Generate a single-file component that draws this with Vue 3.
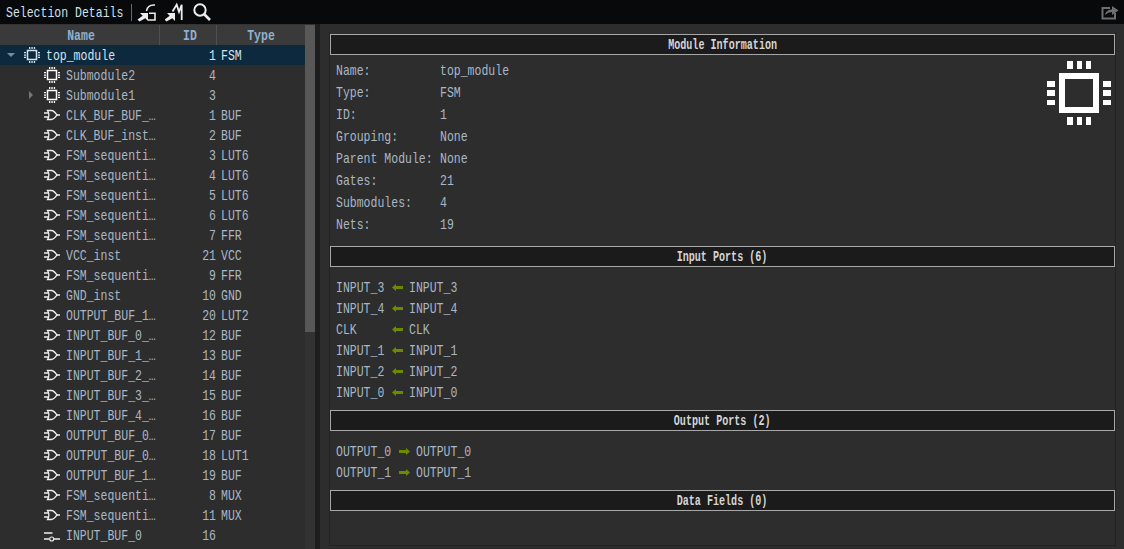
<template>
  <div class="app">
    <div class="toolbar">
      <span class="tb-title"><span class="t">Selection Details</span></span>
      <span class="tb-sep"></span>
      <svg class="tb-icon" width="20" height="20" viewBox="0 0 20 20">
        <path d="M11 11V19L8.300 16.300L2.500 19.500L0.500 17.500L5.700 13.700L3 11Z" fill="#ececec" />
        <path d="M18 3Q10.500 2.500 9.500 9M12 11.300H18V18H11" fill="none" stroke="#ececec" stroke-width="1.600" />
      </svg>
      <svg class="tb-icon second" width="20" height="20" viewBox="0 0 20 20">
        <path d="M10 11V19L7.300 16.300L1.500 19.500L-0.500 17.500L4.700 13.700L2 11Z" fill="#ececec" />
        <path d="M7.500 9.500L11.700 2.700L14 9.700L16.700 2.700V18" fill="none" stroke="#ececec" stroke-width="1.800" />
      </svg>
      <svg class="tb-icon" width="20" height="20" viewBox="0 0 20 20">
        <circle cx="8" cy="8" r="5.700" fill="none" stroke="#ececec" stroke-width="2" />
        <path d="M12 12L18 18" stroke="#ececec" stroke-width="2.600" />
      </svg>
      <svg class="tb-share" width="18" height="16" viewBox="0 0 18 16">
        <path d="M9 4H1.500V14.500H14V9" fill="none" stroke="#6f6f6f" stroke-width="2" />
        <path d="M4 11Q5 5.500 11 5.500V2L17.500 6.500L11 11V8Q7 8 4 11Z" fill="#6f6f6f" />
      </svg>
    </div>

    <div class="main">
      <div class="tree-pane">
        <div class="tree">
          <div class="tree-head">
            <div class="col-name"><span class="t t-center">Name</span></div>
            <div class="col-id"><span class="t t-center">ID</span></div>
            <div class="col-type"><span class="t t-center">Type</span></div>
          </div>
          <div
            v-for="row in rows"
            :key="row.name + row.id"
            class="tree-row"
            :class="{ selected: row.selected }"
          >
            <div class="cell-name" :class="{ child: !row.selected }">
              <span class="caret" :class="row.caret"></span>
              <svg v-if="row.icon === 'chip'" class="row-icon" width="16" height="16" viewBox="0 0 16 16">
                <rect x="3.500" y="3.500" width="9" height="9" fill="none" :stroke="row.selected ? '#d4e4ee' : '#fff'" stroke-width="1.500" />
                <path d="M5 0h1.300v2H5zM7.400 0h1.300v2H7.400zM9.800 0h1.300v2H9.800zM5 14h1.300v2H5zM7.400 14h1.300v2H7.400zM9.800 14h1.300v2H9.800zM0 5h2v1.300H0zM0 7.400h2v1.300H0zM0 9.800h2v1.300H0zM14 5h2v1.300h-2zM14 7.400h2v1.300h-2zM14 9.800h2v1.300h-2z" :fill="row.selected ? '#d4e4ee' : '#fff'" />
              </svg>
              <svg v-else-if="row.icon === 'gate'" class="row-icon" width="16" height="16" viewBox="0 0 16 16">
                <path d="M3.500 3.500H7.500C10 3.500 11.500 6 13 8C11.500 10 10 12.500 7.500 12.500H3.500C5 10 5 6 3.500 3.500Z" fill="none" stroke="#eee" stroke-width="1.300" />
                <path d="M0 6H4.500M0 10H4.500M13 8H16" stroke="#eee" stroke-width="1.300" />
              </svg>
              <svg v-else class="row-icon" width="16" height="16" viewBox="0 0 16 16">
                <path d="M0 6H8.500M0 12H5.500M10 12H16" stroke="#eee" stroke-width="1.300" fill="none" />
                <circle cx="7.700" cy="12" r="2" fill="none" stroke="#eee" stroke-width="1.100" />
              </svg>
              <span class="t name-text">{{ row.name }}</span>
            </div>
            <div class="cell-id"><span class="t t-right">{{ row.id }}</span></div>
            <div class="cell-type"><span class="t">{{ row.type }}</span></div>
          </div>
        </div>
        <div class="scrollbar"><div class="thumb"></div></div>
      </div>
      <div class="splitter"></div>

      <div class="details">
        <div class="frame">
          <div class="section-head"><span class="t t-center">Module Information</span></div>
          <div class="info">
            <div v-for="item in info" :key="item[0]" class="info-row">
              <span class="info-label"><span class="t">{{ item[0] }}</span></span>
              <span class="t">{{ item[1] }}</span>
            </div>
            <svg class="big-chip" width="64" height="64" viewBox="0 0 64 64">
              <rect x="15" y="15" width="34" height="34" fill="none" stroke="#fff" stroke-width="6" />
              <path d="M20 0h6v8h-6zM30 0h5v8h-5zM39 0h5v8h-5zM20 56h6v8h-6zM30 56h5v8h-5zM39 56h5v8h-5zM0 20h8v6H0zM0 29h8v6H0zM0 39h8v5H0zM56 20h8v6h-8zM56 29h8v6h-8zM56 39h8v5h-8z" fill="#fff" />
            </svg>
          </div>

          <div class="section-head"><span class="t t-center">Input Ports (6)</span></div>
          <div class="ports">
            <div v-for="port in inputs" :key="port" class="port-row">
              <span class="input-label"><span class="t">{{ port }}</span></span>
              <span class="arrow">
                <svg width="11" height="7" viewBox="0 0 11 7"><path d="M0 3.500L4 0V2H11V5H4V7Z" fill="#6c8a00" /></svg>
              </span>
              <span class="t">{{ port }}</span>
            </div>
          </div>

          <div class="section-head"><span class="t t-center">Output Ports (2)</span></div>
          <div class="ports">
            <div v-for="port in outputs" :key="port" class="port-row">
              <span class="output-label"><span class="t">{{ port }}</span></span>
              <span class="arrow">
                <svg width="11" height="7" viewBox="0 0 11 7"><path d="M11 3.500L7 0V2H0V5H7V7Z" fill="#6c8a00" /></svg>
              </span>
              <span class="t">{{ port }}</span>
            </div>
          </div>

          <div class="section-head"><span class="t t-center">Data Fields (0)</span></div>
        </div>
      </div>
    </div>
  </div>
</template>

<script setup>
const rows = [
  { name: 'top_module', id: 1, type: 'FSM', icon: 'chip', caret: 'down', selected: true },
  { name: 'Submodule2', id: 4, type: '', icon: 'chip' },
  { name: 'Submodule1', id: 3, type: '', icon: 'chip', caret: 'right' },
  { name: 'CLK_BUF_BUF_…', id: 1, type: 'BUF', icon: 'gate' },
  { name: 'CLK_BUF_inst…', id: 2, type: 'BUF', icon: 'gate' },
  { name: 'FSM_sequenti…', id: 3, type: 'LUT6', icon: 'gate' },
  { name: 'FSM_sequenti…', id: 4, type: 'LUT6', icon: 'gate' },
  { name: 'FSM_sequenti…', id: 5, type: 'LUT6', icon: 'gate' },
  { name: 'FSM_sequenti…', id: 6, type: 'LUT6', icon: 'gate' },
  { name: 'FSM_sequenti…', id: 7, type: 'FFR', icon: 'gate' },
  { name: 'VCC_inst', id: 21, type: 'VCC', icon: 'gate' },
  { name: 'FSM_sequenti…', id: 9, type: 'FFR', icon: 'gate' },
  { name: 'GND_inst', id: 10, type: 'GND', icon: 'gate' },
  { name: 'OUTPUT_BUF_1…', id: 20, type: 'LUT2', icon: 'gate' },
  { name: 'INPUT_BUF_0_…', id: 12, type: 'BUF', icon: 'gate' },
  { name: 'INPUT_BUF_1_…', id: 13, type: 'BUF', icon: 'gate' },
  { name: 'INPUT_BUF_2_…', id: 14, type: 'BUF', icon: 'gate' },
  { name: 'INPUT_BUF_3_…', id: 15, type: 'BUF', icon: 'gate' },
  { name: 'INPUT_BUF_4_…', id: 16, type: 'BUF', icon: 'gate' },
  { name: 'OUTPUT_BUF_0…', id: 17, type: 'BUF', icon: 'gate' },
  { name: 'OUTPUT_BUF_0…', id: 18, type: 'LUT1', icon: 'gate' },
  { name: 'OUTPUT_BUF_1…', id: 19, type: 'BUF', icon: 'gate' },
  { name: 'FSM_sequenti…', id: 8, type: 'MUX', icon: 'gate' },
  { name: 'FSM_sequenti…', id: 11, type: 'MUX', icon: 'gate' },
  { name: 'INPUT_BUF_0', id: 16, type: '', icon: 'net' },
]

const info = [
  ['Name:', 'top_module'],
  ['Type:', 'FSM'],
  ['ID:', '1'],
  ['Grouping:', 'None'],
  ['Parent Module:', 'None'],
  ['Gates:', '21'],
  ['Submodules:', '4'],
  ['Nets:', '19'],
]

const inputs = ['INPUT_3', 'INPUT_4', 'CLK', 'INPUT_1', 'INPUT_2', 'INPUT_0']
const outputs = ['OUTPUT_0', 'OUTPUT_1']
</script>

<style>
html,
body {
  margin: 0;
  background: #2d2d2d;
  overflow: hidden;
}
</style>

<style scoped>
.app {
  width: 1124px;
  height: 549px;
  display: flex;
  flex-direction: column;
  overflow: hidden;
  font-family: "Liberation Mono", monospace;
  font-size: 15px;
  color: #a9b7c6;
  background: #2d2d2d;
}

/* the original font is tall and narrow, so squeeze the mono font to 7px a char */
.t {
  display: inline-block;
  flex: none;
  white-space: pre;
  transform: scaleX(0.767);
  transform-origin: left center;
}

.t-center {
  transform-origin: center center;
}

.t-right {
  transform-origin: right center;
}

.toolbar {
  height: 24px;
  flex: none;
  display: flex;
  align-items: center;
  padding-left: 6px;
  background: #08090b;
}

.tb-title {
  width: 125px;
  flex: none;
  padding-top: 2px;
  color: #cfe0ee;
  white-space: nowrap;
}

.tb-sep {
  width: 1px;
  height: 17px;
  margin-right: 5px;
  background: #6a6a6a;
}

.tb-icon {
  margin-right: 8px;
}

.tb-icon.second {
  margin-right: 7px;
}

.tb-share {
  margin-left: auto;
  margin-right: 5px;
}

.main {
  flex: 1;
  display: flex;
  min-height: 0;
}

.tree-pane {
  width: 315px;
  flex: none;
  display: flex;
  border-top: 1px solid #333;
  overflow: hidden;
}

.tree {
  flex: 1;
  min-width: 0;
}

.tree-head {
  height: 20px;
  display: flex;
  background: #3a3a3a;
  line-height: 24px;
  font-weight: bold;
  color: #8fb0d0;
}

.col-name {
  width: 160px;
  padding-left: 3px;
  text-align: center;
  border-right: 1px solid #505050;
  box-sizing: border-box;
}

.col-id {
  width: 57px;
  text-align: center;
  border-right: 1px solid #505050;
  box-sizing: border-box;
  padding-left: 5px;
}

.col-type {
  flex: 1;
  text-align: center;
}

.tree-row {
  height: 20px;
  display: flex;
  align-items: center;
  line-height: 20px;
  background: #2d2d2d;
}

.tree-row .t {
  padding-top: 4px;
}

.tree-row.selected {
  background: #0d293e;
  color: #d4e4ee;
}

.cell-name {
  width: 160px;
  display: flex;
  align-items: center;
  flex: none;
}

.caret {
  width: 24px;
  padding-right: 2px;
  box-sizing: border-box;
  flex: none;
  display: flex;
  justify-content: center;
}

.child .caret {
  width: 44px;
  padding-left: 20px;
}

.caret.down::before {
  content: "";
  border: 4px solid transparent;
  border-top: 4px solid #7a8a96;
  border-bottom: 0;
}

.caret.right::before {
  content: "";
  border: 4px solid transparent;
  border-left: 4px solid #777;
  border-right: 0;
}

.row-icon {
  flex: none;
  margin-right: 6px;
}

.cell-id {
  width: 56px;
  flex: none;
  text-align: right;
}

.cell-type {
  padding-left: 5px;
}

.scrollbar {
  width: 10px;
  flex: none;
  background: #323232;
}

.thumb {
  height: 307px;
  background: #585858;
}

.splitter {
  width: 5px;
  flex: none;
  background: #1e1e1e;
}

.details {
  flex: 1;
  min-width: 0;
  padding: 8px 8px 3px 9px;
  background: #2d2d2d;
  display: flex;
}

.frame {
  flex: 1;
  min-width: 0;
  border: 1px solid #222;
  border-top: 0;
  padding-top: 2px;
}

.section-head {
  height: 19px;
  line-height: 21px;
  border: 1px solid #a8a8a8;
  background: #1b1b1b;
  text-align: center;
  font-weight: bold;
  color: #d5d5d5;
  font-size: 14px;
}

.section-head .t {
  transform: scaleX(0.72);
}

.info {
  position: relative;
  padding: 6px 6px 9px;
}

.info-row {
  height: 22px;
  line-height: 22px;
  display: flex;
}

.info-label {
  width: 104px;
  flex: none;
}

.big-chip {
  position: absolute;
  top: 6px;
  right: 4px;
}

.ports {
  padding: 10px 6px 7px;
}

.port-row {
  height: 21px;
  line-height: 21px;
  display: flex;
  align-items: center;
}

.port-row .t {
  padding-top: 2px;
}

.input-label {
  width: 49px;
  flex: none;
}

.output-label {
  width: 56px;
  flex: none;
}

.arrow {
  width: 24px;
  padding-left: 7px;
  box-sizing: border-box;
  flex: none;
  display: flex;
}
</style>
